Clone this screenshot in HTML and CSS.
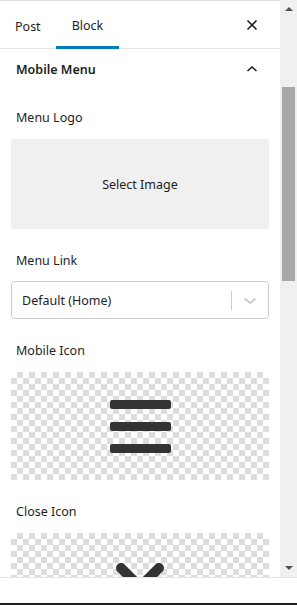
FILE: index.html
```html
<!DOCTYPE html>
<html>
<head>
    <title>Block Settings</title>
    <link rel="stylesheet" href="styles.css">
</head>
<body>
    <div class="frame">
        <div class="sidebar">
            <div class="panel">
                <div class="tabs">
                    <div class="tab">Post</div>
                    <div class="tab tab--active">Block</div>
                    <div class="tabs__close">
                        <svg width="12" height="12" viewBox="0 0 12 12">
                            <path d="M1.5 1.5 L10.5 10.5 M10.5 1.5 L1.5 10.5" stroke="#1e1e1e" stroke-width="1.6" fill="none"/>
                        </svg>
                    </div>
                </div>

                <div class="panel-body">
                    <div class="section-head">
                        <span>Mobile Menu</span>
                        <svg width="12" height="8" viewBox="0 0 12 8">
                            <path d="M1.5 6 L6 2 L10.5 6" stroke="#1e1e1e" stroke-width="1.6" fill="none"/>
                        </svg>
                    </div>

                    <div class="field field--first">
                        <div class="field__label">Menu Logo</div>
                        <div class="image-select">Select Image</div>
                    </div>

                    <div class="field">
                        <div class="field__label field__label--tight">Menu Link</div>
                        <div class="select">
                            <span class="select__value">Default (Home)</span>
                            <span class="select__sep"></span>
                            <span class="select__arrow">
                                <svg width="14" height="8" viewBox="0 0 14 8">
                                    <path d="M1.5 1.5 L7 6 L12.5 1.5" stroke="#cccccc" stroke-width="2" fill="none"/>
                                </svg>
                            </span>
                        </div>
                    </div>

                    <div class="field">
                        <div class="field__label">Mobile Icon</div>
                        <div class="checker">
                            <div class="burger">
                                <span></span>
                                <span></span>
                                <span></span>
                            </div>
                        </div>
                    </div>

                    <div class="field">
                        <div class="field__label">Close Icon</div>
                        <div class="checker">
                            <svg width="60" height="60" viewBox="0 0 60 60">
                                <path d="M11 11 L49 49 M49 11 L11 49" stroke="#333333" stroke-width="10" stroke-linecap="round" fill="none"/>
                            </svg>
                        </div>
                    </div>
                </div>
            </div>

            <div class="scrollbar">
                <div class="scrollbar__up"></div>
                <div class="scrollbar__track">
                    <div class="scrollbar__thumb"></div>
                </div>
                <div class="scrollbar__down"></div>
            </div>
        </div>

        <div class="footer"></div>
    </div>
</body>
</html>
```

FILE: styles.css
```css
body {
    margin: 0;
    background: #fff;
    font-family: "Noto Sans", "Open Sans", sans-serif;
    font-size: 12.5px;
    color: #1e1e1e;
}

.frame {
    width: 297px;
    height: 605px;
    display: flex;
    flex-direction: column;
    overflow: hidden;
}

.sidebar {
    display: flex;
    height: 577px;
    border-bottom: 1px solid #e2e4e7;
}

.panel {
    width: 280px;
    display: flex;
    flex-direction: column;
    border-top: 1px solid #e0e0e0;
    box-sizing: border-box;
}

/* tabs */
.tabs {
    display: flex;
    align-items: stretch;
    height: 48px;
    box-sizing: border-box;
    border-bottom: 1px solid #e2e4e7;
    flex-shrink: 0;
}

.tab {
    display: flex;
    align-items: center;
    padding: 3px 15px 0;
    box-sizing: border-box;
    margin-bottom: -1px;
}

.tab--active {
    padding: 3px 16px 0;
    border-bottom: 3px solid #007cba;
}

.tabs__close {
    margin-left: auto;
    width: 56px;
    display: flex;
    align-items: center;
    justify-content: center;
    padding-top: 1px;
}

/* body */
.panel-body {
    flex: 1;
    overflow: hidden;
    padding: 0 11px;
}

.section-head {
    height: 40px;
    display: flex;
    align-items: center;
    justify-content: space-between;
    padding: 0 11px 0 5px;
    font-weight: 600;
}

.field {
    margin-top: 22px;
}

.field--first {
    margin-top: 19px;
}

.field__label {
    line-height: 20px;
    padding-left: 5px;
    margin-bottom: 11px;
}

.field__label--tight {
    margin-bottom: 10px;
}

.image-select {
    height: 90px;
    background: #f0f0f0;
    border-radius: 2px;
    display: flex;
    align-items: center;
    justify-content: center;
}

.select {
    height: 38px;
    box-sizing: border-box;
    border: 1px solid #cccccc;
    border-radius: 4px;
    display: flex;
    align-items: center;
}

.select__value {
    flex: 1;
    padding-left: 10px;
}

.select__sep {
    width: 1px;
    height: 19px;
    background: #cccccc;
}

.select__arrow {
    width: 36px;
    display: flex;
    justify-content: center;
    padding-top: 1px;
}

.checker {
    height: 108px;
    background: repeating-conic-gradient(#dddddd 0 25%, #ffffff 0 50%) 0 0 / 12px 12px;
    display: flex;
    align-items: center;
    justify-content: center;
}

.burger {
    display: flex;
    flex-direction: column;
    gap: 13px;
}

.burger span {
    display: block;
    width: 61px;
    height: 9px;
    background: #333;
    border-radius: 2px;
}

/* fake scrollbar */
.scrollbar {
    width: 17px;
    background: #f0f0f0;
    display: flex;
    flex-direction: column;
}

.scrollbar__up,
.scrollbar__down {
    height: 17px;
    position: relative;
}

.scrollbar__up::after,
.scrollbar__down::after {
    content: "";
    position: absolute;
    left: 5px;
    border-left: 4px solid transparent;
    border-right: 4px solid transparent;
}

.scrollbar__up::after {
    top: 7px;
    border-bottom: 4px solid #505050;
}

.scrollbar__down::after {
    top: 6px;
    border-top: 4px solid #505050;
}

.scrollbar__track {
    flex: 1;
    padding: 70px 2px 0;
}

.scrollbar__thumb {
    height: 194px;
    background: #a8a8a8;
}

.footer {
    flex: 1;
    border-bottom: 2px solid #1e1e1e;
}
```
